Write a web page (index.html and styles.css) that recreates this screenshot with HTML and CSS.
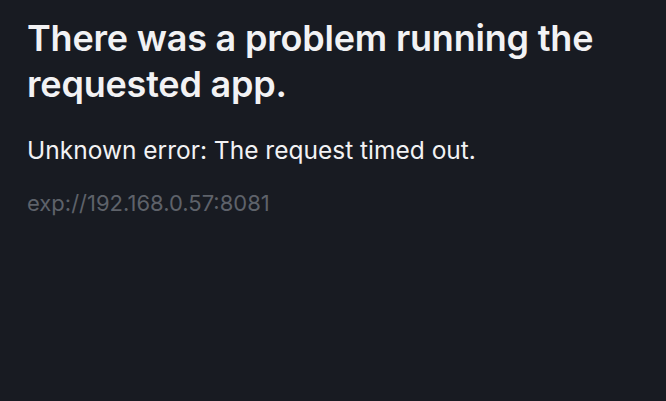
FILE: index.html
```html
<!DOCTYPE html>
<html lang="en">
<head>
<meta charset="utf-8">
<title>Error</title>
<link rel="stylesheet" href="styles.css">
</head>
<body>
<div class="error-screen">
	<h1 class="error-title">There was a problem running the requested app.</h1>
	<p class="error-message">Unknown error: The request timed out.</p>
	<p class="error-url">exp://192.168.0.57:8081</p>
</div>
</body>
</html>
```

FILE: styles.css
```css
* {margin:0; padding:0; box-sizing:border-box;}
html, body {height:100%;}
body {background:#181b22; font-family:Inter, "Liberation Sans", sans-serif; color:#f2f2f4;}
.error-screen {padding:15px 27px 0 27px;}
.error-title {font-size:36px; line-height:46px; font-weight:600; letter-spacing:-0.2px; max-width:600px;}
.error-message {margin-top:28px; font-size:24.5px; line-height:30px; font-weight:400;}
.error-url {margin-top:24px; font-size:22px; line-height:28px; color:#5e626a;}
```
